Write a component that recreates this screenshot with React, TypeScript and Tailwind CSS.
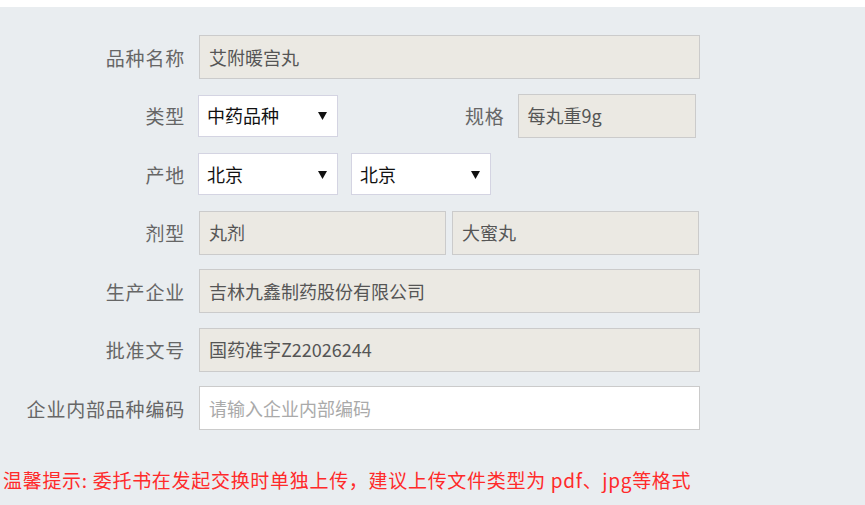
import React from "react"

const font = { fontFamily: '"Noto Sans CJK SC", "Noto Sans", sans-serif' }

function Label({ text, className = "" }: { text: string; className?: string }) {
  return (
    <div className={`text-[19px] tracking-[0.8px] text-[#666] leading-none whitespace-nowrap ${className}`}>
      {text}
    </div>
  )
}

function ReadOnly({ value, className = "" }: { value: string; className?: string }) {
  return (
    <div
      className={`h-[44px] flex items-center pl-[9px] bg-[#ebe9e3] border border-[#cbcbcb] text-[18px] text-[#555] ${className}`}
    >
      {value}
    </div>
  )
}

function Select({ value }: { value: string }) {
  return (
    <div className="h-[42px] w-[140px] flex items-center justify-between pl-[8px] pr-[10px] bg-white border border-[#d4d4e2] text-[18px] text-[#111]">
      <span>{value}</span>
      <svg width="9" height="9" viewBox="0 0 9 9">
        <polygon points="0,1 9,1 4.5,9" fill="#111" />
      </svg>
    </div>
  )
}

export default function App() {
  return (
    <div className="w-[865px] h-[505px] bg-[#e9edf0] overflow-hidden" style={font}>
      <div className="h-[7px] bg-white" />
      <div className="pt-[28px] flex flex-col gap-[14.5px]">
        <div className="flex items-center h-[44px]">
          <div className="w-[185px] flex justify-end">
            <Label text="品种名称" />
          </div>
          <ReadOnly value="艾附暖宫丸" className="ml-[14px] w-[501px]" />
        </div>

        <div className="flex items-center h-[44px]">
          <div className="w-[185px] flex justify-end">
            <Label text="类型" />
          </div>
          <div className="ml-[13px]">
            <Select value="中药品种" />
          </div>
          <Label text="规格" className="ml-[127px]" />
          <ReadOnly value="每丸重9g" className="ml-[13px] w-[178px]" />
        </div>

        <div className="flex items-center h-[44px]">
          <div className="w-[185px] flex justify-end">
            <Label text="产地" />
          </div>
          <div className="ml-[13px] flex gap-[13px]">
            <Select value="北京" />
            <Select value="北京" />
          </div>
        </div>

        <div className="flex items-center h-[44px]">
          <div className="w-[185px] flex justify-end">
            <Label text="剂型" />
          </div>
          <div className="ml-[14px] flex gap-[6px]">
            <ReadOnly value="丸剂" className="w-[247px]" />
            <ReadOnly value="大蜜丸" className="w-[247px]" />
          </div>
        </div>

        <div className="flex items-center h-[44px]">
          <div className="w-[185px] flex justify-end">
            <Label text="生产企业" />
          </div>
          <ReadOnly value="吉林九鑫制药股份有限公司" className="ml-[14px] w-[501px]" />
        </div>

        <div className="flex items-center h-[44px]">
          <div className="w-[185px] flex justify-end">
            <Label text="批准文号" />
          </div>
          <ReadOnly value="国药准字Z22026244" className="ml-[14px] w-[501px]" />
        </div>

        <div className="flex items-center h-[44px]">
          <div className="w-[185px] flex justify-end">
            <Label text="企业内部品种编码" />
          </div>
          <input
            placeholder="请输入企业内部编码"
            className="ml-[14px] w-[501px] h-[44px] pl-[9px] bg-white border border-[#cbcbcb] text-[18px] text-[#555] placeholder:text-[#aaa] outline-none"
          />
        </div>
      </div>
      <div className="pt-[40px] pl-[3px] text-[19px] tracking-[0.7px] leading-none text-[#ff2a2a] whitespace-nowrap">
        温馨提示: 委托书在发起交换时单独上传，建议上传文件类型为 pdf、jpg等格式
      </div>
    </div>
  )
}
